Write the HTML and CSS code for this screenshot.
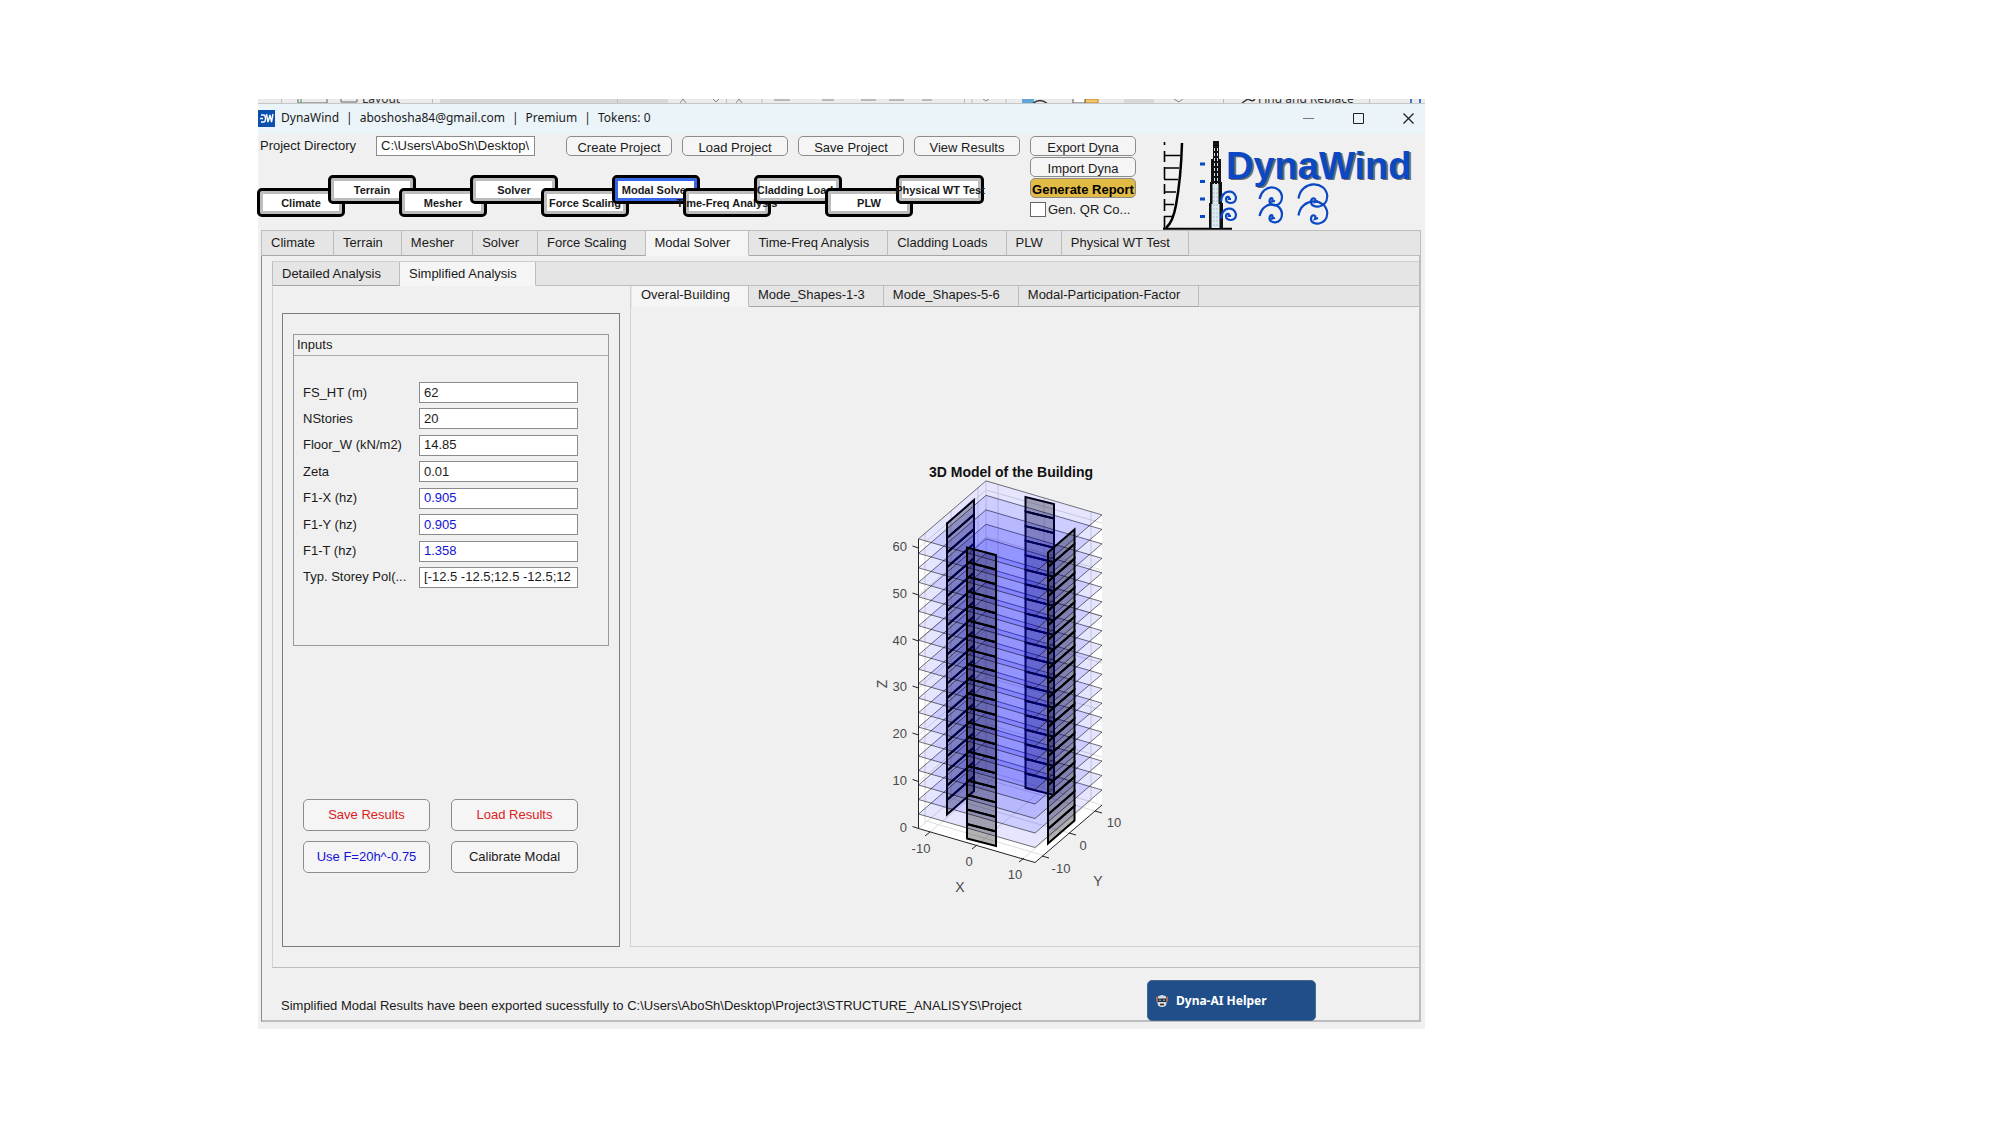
FILE: index.html
```html
<!DOCTYPE html>
<html lang="en">
<head>
<meta charset="utf-8">
<title>DynaWind</title>
<link rel="stylesheet" href="styles.css">
</head>
<body>
<div class="window">
  <svg class="ribbon" viewBox="258 99 1167 5" preserveAspectRatio="xMinYMin slice" aria-hidden="true">
    <path d="M258 99h1167v5H258z" fill="#ebebeb"/>
    <path d="M440 99h228v4H440zM1124 99h30v4h-30z" fill="#d8d8d8"/>
    <path d="M281.500 99v5M432.500 99v5M617.500 99v5M726.500 99v5M762 99v5M964.500 99v5M972 99v5M1006 99v5M1223.500 99v5M1369.500 99v5" stroke="#bbb"/>
    <path d="M298 99v4h29v-4M341 99v3h16v-3" fill="none" stroke="#666"/>
    <path d="M301 99v4" stroke="#2a9a4b"/>
    <path d="M774 100h16M822 100h12M861 100h15M889 100h15M922 100h10M680 103l3-4 3 4M736 103l3-4 3 4M713 99l3 3 3-3M983 99l3 2 3-2M1174 99l5 3 4-3" fill="none" stroke="#888"/>
    <path d="M1022 99h12v5h-12z" fill="#5fa5d8"/>
    <path d="M1032 104q8-7 16 0M1242 103l6-4q6 4 7-1" fill="none" stroke="#333" stroke-width="1.500"/>
    <path d="M1085 99h13v4h-13z" fill="#f2c66c" stroke="#c58328"/>
    <path d="M1073 99v4h12v-4" fill="#fff" stroke="#555"/>
    <path d="M1411 99v5M1420 99v5" stroke="#3d76d0" stroke-width="2"/>
    <text x="362" y="103" class="ribbon-text">Layout</text>
    <text x="1258" y="103" class="ribbon-text">Find and Replace</text>
    <path d="M258 103.500h1167" stroke="#c4c8ca"/>
  </svg>

  <header class="titlebar">
    <svg class="app-icon" viewBox="0 0 17 17" aria-hidden="true">
      <path d="M0 0h17v17H0z" fill="#0b4fae"/>
      <path d="M3 5h2.500q2 0 2 3.500t-2 3.500H3M2 8.500h3M8.500 4l1.500 8L12 5l1.500 7L15 4" fill="none" stroke="#fff" stroke-width="1.400"/>
    </svg>
    <div class="caption"><span>DynaWind</span><span>|</span><span>aboshosha84@gmail.com</span><span>|</span><span>Premium</span><span>|</span><span>Tokens: 0</span></div>
    <div class="win-controls">
      <button type="button" aria-label="Minimize"><svg viewBox="0 0 11 11"><path d="M0 5.500h11" stroke="#777"/></svg></button>
      <button type="button" aria-label="Maximize"><svg viewBox="0 0 11 11"><path d="M.5 .5h10v10H.5z" stroke="#222"/></svg></button>
      <button type="button" aria-label="Close"><svg viewBox="0 0 11 11"><path d="M.5 .5l10 10M10.500 .5l-10 10" stroke="#222" stroke-width="1.300"/></svg></button>
    </div>
  </header>

  <section class="toolbar">
    <div class="toolbar-main">
      <div class="project-row">
        <label for="dir">Project Directory</label>
        <input id="dir" class="field" type="text" value="C:\Users\AboSh\Desktop\Project3">
        <button type="button" class="btn low">Create Project</button>
        <button type="button" class="btn low">Load Project</button>
        <button type="button" class="btn low">Save Project</button>
        <button type="button" class="btn low">View Results</button>
      </div>
      <div class="steps">
        <div class="step down">Climate</div>
        <div class="step">Terrain</div>
        <div class="step down">Mesher</div>
        <div class="step">Solver</div>
        <div class="step down">Force Scaling</div>
        <div class="step current">Modal Solver</div>
        <div class="step down">Time-Freq Analysis</div>
        <div class="step">Cladding Loads</div>
        <div class="step down">PLW</div>
        <div class="step">Physical WT Test</div>
      </div>
    </div>
    <div class="toolbar-side">
      <button type="button" class="btn low">Export Dyna</button>
      <button type="button" class="btn low">Import Dyna</button>
      <button type="button" class="btn low report">Generate Report</button>
      <label class="qr"><input type="checkbox"><span>Gen. QR Co...</span></label>
    </div>
    <svg class="logo" viewBox="1160 136 265 94" role="img" aria-label="DynaWind">
      <g fill="none" stroke="#000">
        <path d="M1164.500 142v3M1164.500 151v11M1164.500 167v12M1164.500 184v10M1164.500 199v12M1164.500 216v12" stroke-width="1.600"/>
        <path d="M1164 155.500h16M1164 168h15M1164 179.500h14M1164 192h12M1164 204.500h10M1164 216.500h8" stroke-width="1.600"/>
        <path d="M1182 143q-1 35-6 62-3 17-10 23" stroke-width="2.500"/>
        <path d="M1163 228.700h69" stroke-width="2"/>
      </g>
      <path d="M1213 141h6v18h2v23h1v21h1v25h-14v-25h1v-21h1v-23h2z" fill="#111"/>
      <path d="M1212.500 184h6v20h1v24h-8v-24h1z" fill="#dceaf2"/>
      <path d="M1214.500 148v40M1217.500 148v40" stroke="#d2e5ef" stroke-dasharray="3 2"/>
      <path d="M1214 188v40M1217 188v40" stroke="#8b9aa3" stroke-width=".5" stroke-dasharray="2 2"/>
      <path d="M1200 164h5M1200 181.500h5M1200 199h5M1200 216.500h5" stroke="#0b49c4" stroke-width="3"/>
      <g fill="none" stroke="#0b49c4" stroke-width="2.200">
        <g id="gusts">
          <path d="M1221 201.500C1222 189 1235 189 1236 197.500C1236 205 1226 204 1226 199.500C1226 196 1230 196 1229 199L1231 199"/>
          <path d="M1259.500 199C1263 183 1281 185 1282 196.500C1282 208 1269 207 1269.500 201C1270 197 1274 197 1272 201.500L1275 201"/>
          <path d="M1298.500 198.500C1301 180 1326 180 1327.300 196C1327 209 1311 209 1311 202C1311 197 1317 197 1315 202L1318 201"/>
        </g>
        <use href="#gusts" y="17"/>
      </g>
      <text x="1228" y="180" class="logo-shadow">DynaWind</text>
      <text x="1226" y="179" class="logo-text">DynaWind</text>
    </svg>
  </section>

  <main class="workspace">
    <nav class="tabs outer-tabs">
      <button type="button">Climate</button>
      <button type="button">Terrain</button>
      <button type="button">Mesher</button>
      <button type="button">Solver</button>
      <button type="button">Force Scaling</button>
      <button type="button" class="active">Modal Solver</button>
      <button type="button">Time-Freq Analysis</button>
      <button type="button">Cladding Loads</button>
      <button type="button">PLW</button>
      <button type="button">Physical WT Test</button>
    </nav>
    <div class="outer-panel">
      <nav class="tabs analysis-tabs">
        <button type="button">Detailed Analysis</button>
        <button type="button" class="active">Simplified Analysis</button>
      </nav>
      <div class="analysis">
        <section class="settings">
          <fieldset class="inputs" aria-labelledby="inputs-title">
            <div class="inputs-title" id="inputs-title">Inputs</div>
            <div class="rows">
              <div class="row"><label for="ht">FS_HT (m)</label><input id="ht" class="field" value="62"></div>
              <div class="row"><label for="ns">NStories</label><input id="ns" class="field" value="20"></div>
              <div class="row"><label for="fw">Floor_W (kN/m2)</label><input id="fw" class="field" value="14.85"></div>
              <div class="row"><label for="ze">Zeta</label><input id="ze" class="field" value="0.01"></div>
              <div class="row"><label for="fx">F1-X (hz)</label><input id="fx" class="field blue" value="0.905"></div>
              <div class="row"><label for="fy">F1-Y (hz)</label><input id="fy" class="field blue" value="0.905"></div>
              <div class="row"><label for="ft">F1-T (hz)</label><input id="ft" class="field blue" value="1.358"></div>
              <div class="row"><label for="sp">Typ. Storey Pol(...</label><input id="sp" class="field" value="[-12.5 -12.5;12.5 -12.5;12.5 12.5;-12.5 12.5]"></div>
            </div>
          </fieldset>
          <div class="actions">
            <button type="button" class="btn red">Save Results</button>
            <button type="button" class="btn red">Load Results</button>
            <button type="button" class="btn blue">Use F=20h^-0.75</button>
            <button type="button" class="btn">Calibrate Modal</button>
          </div>
        </section>
        <section class="results">
          <nav class="tabs result-tabs">
            <button type="button" class="active">Overal-Building</button>
            <button type="button">Mode_Shapes-1-3</button>
            <button type="button">Mode_Shapes-5-6</button>
            <button type="button">Modal-Participation-Factor</button>
          </nav>
          <svg class="plot" viewBox="631 307 788 639" role="img" aria-label="3D Model of the Building">
            <defs>
              <!-- one storey slab, and stacks of five built from it -->
              <polygon id="slab" points="918.500,814 1035,847.500 1102,790 986,756" fill="#00f" fill-opacity=".1" stroke="#000" stroke-opacity=".55"/>
              <g id="slabs"><use href="#slab"/><use href="#slab" y="-14.480"/><use href="#slab" y="-28.960"/><use href="#slab" y="-43.440"/><use href="#slab" y="-57.920"/></g>
              <!-- wall panels, one storey high each -->
              <polygon id="wf" class="panel" points="967,838.500 996,846 996,831.500 967,824"/>
              <polygon id="wl" class="panel" points="947,814.500 974,791 974,776.500 947,800"/>
              <polygon id="wb" class="panel" points="1025.500,788 1054,795 1054,780.500 1025.500,773.500"/>
              <polygon id="wr" class="panel" points="1048,843.500 1074.500,820.500 1074.500,806 1048,829"/>
              <g id="wf5"><use href="#wf"/><use href="#wf" y="-14.550"/><use href="#wf" y="-29.100"/><use href="#wf" y="-43.650"/><use href="#wf" y="-58.200"/></g>
              <g id="wl5"><use href="#wl"/><use href="#wl" y="-14.550"/><use href="#wl" y="-29.100"/><use href="#wl" y="-43.650"/><use href="#wl" y="-58.200"/></g>
              <g id="wb5"><use href="#wb"/><use href="#wb" y="-14.550"/><use href="#wb" y="-29.100"/><use href="#wb" y="-43.650"/><use href="#wb" y="-58.200"/></g>
              <g id="wr5"><use href="#wr"/><use href="#wr" y="-14.550"/><use href="#wr" y="-29.100"/><use href="#wr" y="-43.650"/><use href="#wr" y="-58.200"/></g>
            </defs>
            <polygon points="918.500,539 986,481 1102,514 1102,805 1035,862.500 918.500,828.500" fill="#fff"/>
            <g fill="none" stroke="#dcdcdc">
              <path d="M918.500 828.500L986 771l116 34M986 771V481M925 823V533M951 800V511M978 777V487M998 775V485M1044 788V498M1091 801V511"/>
              <path d="M930 832l67-57M977 845l67-57M1024 858l67-57M1042 855l-116-34M1069 833l-116-34M1095 811L979 777"/>
              <path d="M918.500 782l67.500-58 116 33M918.500 735l67.500-58 116 33M918.500 688l67.500-58 116 33M918.500 641l67.500-58 116 33M918.500 595l67.500-58 116 33M918.500 548l67.500-58 116 33"/>
            </g>
            <use href="#wl5"/><use href="#wl5" y="-72.750"/><use href="#wl5" y="-145.500"/><use href="#wl5" y="-218.250"/>
            <use href="#wb5"/><use href="#wb5" y="-72.750"/><use href="#wb5" y="-145.500"/><use href="#wb5" y="-218.250"/>
            <use href="#slabs"/><use href="#slabs" y="-72.400"/><use href="#slabs" y="-144.800"/><use href="#slabs" y="-217.200"/>
            <path d="M947 814.500V522.500" stroke="#000" stroke-width="1.500"/>
            <use href="#wf5"/><use href="#wf5" y="-72.750"/><use href="#wf5" y="-145.500"/><use href="#wf5" y="-218.250"/>
            <use href="#wr5"/><use href="#wr5" y="-72.750"/><use href="#wr5" y="-145.500"/><use href="#wr5" y="-218.250"/>
            <g fill="none" stroke="#222">
              <path d="M918.500 539v289.500L1035 862.500l67-57.500"/>
              <path d="M918.500 828.500l-6-2M918.500 781.500l-6-2M918.500 735l-6-2M918.500 688l-6-2M918.500 641l-6-2M918.500 595l-6-2M918.500 548l-6-2M930 832l-5 4M977 845l-5 4M1024 858l-5 4M1042 856l7 2M1069 833l7 2M1095 811l7 2"/>
            </g>
            <text x="1011" y="477" class="plot-title">3D Model of the Building</text>
            <g class="ticks" text-anchor="end">
              <text x="907" y="832">0</text><text x="907" y="785">10</text><text x="907" y="738">20</text><text x="907" y="691">30</text><text x="907" y="645">40</text><text x="907" y="598">50</text><text x="907" y="551">60</text>
            </g>
            <g class="ticks" text-anchor="middle">
              <text x="921" y="853">-10</text><text x="969" y="866">0</text><text x="1015" y="879">10</text>
              <text x="1061" y="873">-10</text><text x="1083" y="850">0</text><text x="1114" y="827">10</text>
            </g>
            <g class="axis" text-anchor="middle">
              <text x="960" y="892">X</text><text x="1098" y="886">Y</text>
              <text transform="translate(887 684) rotate(-90)">Z</text>
            </g>
          </svg>
        </section>
      </div>
      <footer class="status">
        <output>Simplified Modal Results have been exported sucessfully to C:\Users\AboSh\Desktop\Project3\STRUCTURE_ANALISYS\Project</output>
        <button type="button" class="helper">
          <svg viewBox="0 0 12 14" aria-hidden="true"><path d="M2 2.500q4-3 8 0l1 4-1 5q-4 3-8 0l-1-5z" fill="#d9d9dc"/><path d="M1.500 4.500h9v3.500h-9z" fill="#26303a"/><path d="M3 6.200h2M7 6.200h2" stroke="#7cc4e0"/><path d="M.5 2.500v5M11.500 2.500v5" stroke="#d9573c"/><path d="M4 10.500h4" stroke="#333" stroke-width="1.600"/></svg>
          <span>Dyna-AI Helper</span>
        </button>
      </footer>
    </div>
  </main>
</div>
</body>
</html>
```
FILE: styles.css
```css
* { box-sizing: border-box; }

body {
  margin: 0;
  padding: 99px 576px 97px 258px;
  background: #fff;
  color: #1a1a1a;
  font: 13px/16px "Liberation Sans", Arial, sans-serif;
}

button, input { font: inherit; color: inherit; }
button { padding: 0; white-space: nowrap; }

.window { background: #f0f0f0; padding-bottom: 7px; }

.ribbon { display: block; width: 100%; height: 5px; }
.ribbon-text { font: 12px "Noto Sans", sans-serif; fill: #333; }

/* title bar */
.titlebar {
  display: flex;
  align-items: center;
  height: 30px;
  padding-bottom: 2px;
  background: #ebf4f9;
}
.app-icon { width: 17px; height: 17px; margin-right: 6px; }
.caption {
  display: flex;
  gap: 7px;
  flex: 1;
  font-family: "Noto Sans", sans-serif;
  font-size: 12px;
}
.win-controls { display: flex; gap: 39px; padding-right: 11px; }
.win-controls button { border: 0; background: none; width: 11px; height: 11px; }
.win-controls svg { display: block; fill: none; width: 11px; height: 11px; }

/* toolbar */
.toolbar { display: flex; height: 96px; padding-top: 2px; }
.toolbar-main { width: 772px; }
.project-row { display: flex; gap: 10px; padding-left: 2px; }
.project-row label { width: 106px; padding-top: 2px; }
.project-row .field { width: 159px; height: 20px; margin-right: 21px; }

.field {
  border: 1px solid #8c8c8c;
  background: #fff;
  padding: 0 5px 1px 4px;
  min-width: 0;
}
.btn {
  width: 106px;
  height: 20px;
  border: 1px solid #8c8c8c;
  border-radius: 5px;
  background: #f5f5f5;
}
.btn.low { padding-top: 4px; line-height: 14px; overflow: hidden; }
.red { color: #e0201c; }
.blue { color: #1212d8; }

.steps { display: flex; padding-top: 19px; margin-left: -1px; }
.step {
  width: 88px;
  height: 29px;
  border: 3px solid #000;
  border-radius: 5px;
  background: #fff;
  box-shadow: inset 0 0 0 3px #bdbdbd;
  display: flex;
  align-items: center;
  justify-content: center;
  white-space: nowrap;
  font-size: 11px;
  font-weight: bold;
  flex: none;
}
.step + .step { margin-left: -17px; }
.step.down { margin-top: 13px; }
.step.current { box-shadow: inset 0 0 0 3px #3565e8; }

.toolbar-side { display: flex; flex-direction: column; gap: 1px; width: 106px; }
.toolbar .report { background: #e2bb45; color: #000; font-weight: bold; }
.qr { display: flex; gap: 2px; padding-top: 3px; white-space: nowrap; }
.qr input {
  appearance: none;
  flex: none;
  margin: 0;
  width: 16px;
  height: 15px;
  border: 1px solid #666;
  background: #fff;
}
.logo { flex: 1; margin-left: 24px; height: 94px; min-width: 0; }
.logo-text, .logo-shadow { font: bold 38px "Liberation Sans", Arial, sans-serif; }
.logo-text { fill: #0b49c4; }
.logo-shadow { fill: #6d6d6d; }

/* tab strips */
.tabs { display: flex; background: #e5e5e5; }
.tabs button {
  border: 0;
  border-right: 1px solid #bdbdbd;
  border-bottom: 1px solid #a6a6a6;
  background: #e5e5e5;
  padding: 0 18px 0 9px;
}
.tabs::after { content: ""; flex: 1; border-bottom: 1px solid #bdbdbd; }
.tabs .active { background: #f5f5f5; border-bottom-color: #f5f5f5; }

.workspace { margin: 0 4px 0 3px; }
.outer-tabs { height: 26px; border: 1px solid #bdbdbd; border-bottom: 0; }
.outer-panel {
  border: 1px solid #8c8c8c;
  border-top: 0;
  border-right: 2px solid #bdbdbd;
  border-bottom: 2px solid #bdbdbd;
  padding: 5px 0 0 10px;
}
.analysis-tabs { height: 25px; border-left: 1px solid #bdbdbd; border-top: 1px solid #cfcfcf; }
.analysis {
  display: flex;
  gap: 10px;
  padding: 0 0 20px 9px;
  border-left: 1px solid #d2d2d2;
  border-bottom: 1px solid #bdbdbd;
}

.settings {
  width: 338px;
  margin-top: 27px;
  border: 1px solid #7c7c7c;
  padding: 20px 10px 0;
  flex: none;
}
.inputs { margin: 0; padding: 0; border: 1px solid #999; height: 312px; min-width: 0; }
.inputs-title { height: 21px; border-bottom: 1px solid #adadad; padding: 2px 3px 0; }
.rows {
  height: 206px;
  margin: 26px 30px 0 9px;
  display: flex;
  flex-direction: column;
  justify-content: space-between;
}
.row { display: flex; align-items: center; }
.row label { flex: 1; white-space: nowrap; }
.row .field { width: 159px; height: 21px; }

.actions {
  display: grid;
  grid-template-columns: 127px 127px;
  gap: 10px 21px;
  padding: 153px 0 0 10px;
}
.actions .btn { width: 100%; height: 32px; }

.results { flex: 1; min-width: 0; border-left: 1px solid #d2d2d2; border-bottom: 1px solid #d2d2d2; }
.result-tabs { height: 21px; padding-left: 1px; }
.result-tabs button { padding-bottom: 2px; }
.plot { display: block; width: 100%; height: auto; }
.plot-title { font-size: 14px; font-weight: bold; text-anchor: middle; fill: #111; }
.panel { fill: #000; fill-opacity: .3; stroke: #000; stroke-width: 2px; }
.ticks { font-size: 13px; fill: #4a4a4a; }
.axis { font-size: 14px; fill: #4a4a4a; }

/* status line */
.status { display: flex; justify-content: space-between; padding: 12px 103px 0 9px; height: 52px; }
.status output { padding-top: 18px; white-space: nowrap; }
.helper {
  display: flex;
  align-items: center;
  gap: 8px;
  width: 169px;
  height: 41px;
  padding-left: 8px;
  border: 1px solid #45678f;
  border-radius: 5px;
  background: #1f4e89;
  color: #fff;
  font-family: "Noto Sans", sans-serif;
  font-size: 12px;
  font-weight: bold;
}
.helper svg { width: 12px; height: 14px; }
```
